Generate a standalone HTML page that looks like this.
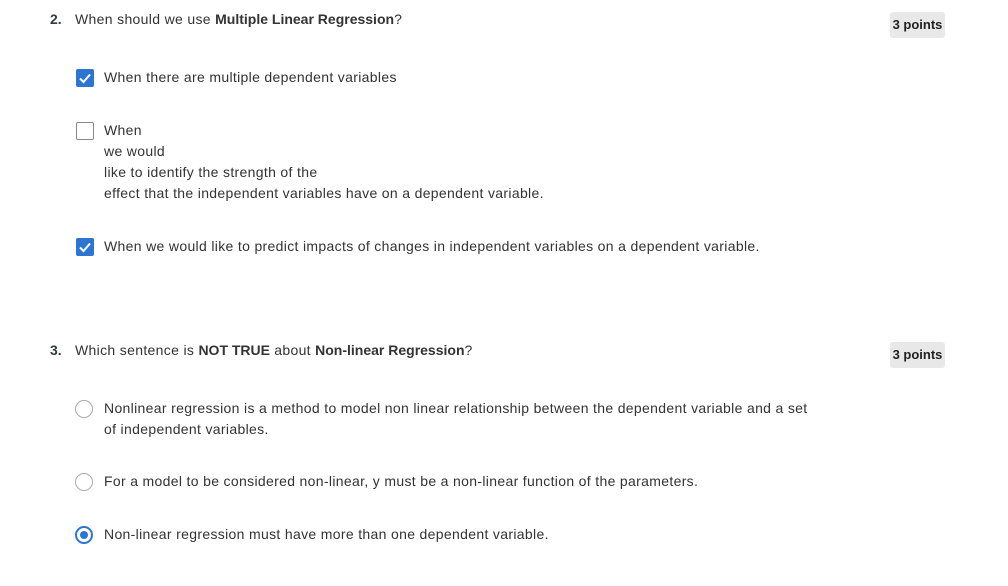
<!DOCTYPE html>
<html><head><style>
body{margin:0;background:#fff;font-family:"Liberation Sans",sans-serif;color:#333;width:1008px;height:586px;position:relative;overflow:hidden}
.t{position:absolute;font-size:14px;line-height:21px;white-space:nowrap;letter-spacing:0.33px}
.t b{letter-spacing:0}
.num{position:absolute;font-size:14px;font-weight:bold;color:#2d3b45}
.pts{position:absolute;background:#e8e8e8;border-radius:3px;font-size:13px;font-weight:bold;color:#222;text-align:center;line-height:26px;width:55px;height:26px}
.cb{position:absolute;width:18px;height:18px;box-sizing:border-box;border-radius:2px}
.cb.on{background:#2d75d2}
.cb.off{border:1px solid #888;background:#fff}
.r{position:absolute;width:18px;height:18px;box-sizing:border-box;border-radius:50%;border:1.5px solid #aaa;background:#fff}
.r.on{border:2px solid #2d75d2}
.r.on:after{content:"";position:absolute;left:3px;top:3px;width:8px;height:8px;border-radius:50%;background:#2d75d2}
</style></head><body>
<div class="num" style="left:50px;top:11px">2.</div>
<div class="t" style="left:75px;top:9px">When should we use <b>Multiple Linear Regression</b>?</div>
<div class="pts" style="left:890px;top:12px">3 points</div>

<div class="cb on" style="left:76px;top:69px"><svg width="18" height="18"><path d="M4 9.5l3.5 3.5L14 5.5" stroke="#fff" stroke-width="2" fill="none"/></svg></div>
<div class="t" style="left:104px;top:67px">When there are multiple dependent variables</div>

<div class="cb off" style="left:76px;top:122px"></div>
<div class="t" style="left:104px;top:120px">When<br>we would<br>like to identify the strength of the<br>effect that the independent variables have on a dependent variable.</div>

<div class="cb on" style="left:76px;top:238px"><svg width="18" height="18"><path d="M4 9.5l3.5 3.5L14 5.5" stroke="#fff" stroke-width="2" fill="none"/></svg></div>
<div class="t" style="left:104px;top:236px">When we would like to predict impacts of changes in independent variables on a dependent variable.</div>

<div class="num" style="left:50px;top:342px">3.</div>
<div class="t" style="left:75px;top:340px">Which sentence is <b>NOT TRUE</b> about <b>Non-linear Regression</b>?</div>
<div class="pts" style="left:890px;top:342px">3 points</div>

<div class="r" style="left:75px;top:400px"></div>
<div class="t" style="left:104px;top:398px">Nonlinear regression is a method to model non linear relationship between the dependent variable and a set<br>of independent variables.</div>

<div class="r" style="left:75px;top:473px"></div>
<div class="t" style="left:104px;top:471px">For a model to be considered non-linear, y must be a non-linear function of the parameters.</div>

<div class="r on" style="left:75px;top:526px"></div>
<div class="t" style="left:104px;top:524px">Non-linear regression must have more than one dependent variable.</div>
</body></html>
